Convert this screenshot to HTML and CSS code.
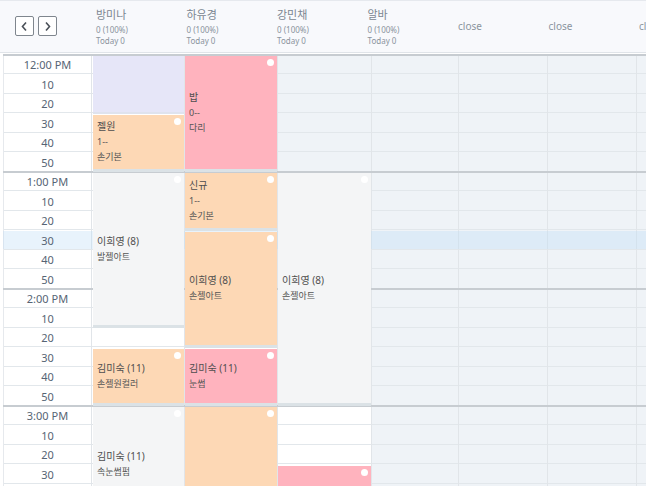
FILE: index.html
```html
<!DOCTYPE html>
<html lang="ko">
<head>
<meta charset="utf-8">
<title>Schedule</title>
<link rel="stylesheet" href="styles.css">
</head>
<body>
<div class="header">
  <div class="nav">
    <button class="navbtn" aria-label="prev"><svg width="9" height="11" viewBox="0 0 9 11"><path d="M6 1.5 L2.5 5.5 L6 9.5" fill="none" stroke="#4a5058" stroke-width="1.6"/></svg></button>
    <button class="navbtn" aria-label="next"><svg width="9" height="11" viewBox="0 0 9 11"><path d="M3 1.5 L6.5 5.5 L3 9.5" fill="none" stroke="#4a5058" stroke-width="1.6"/></svg></button>
  </div>
  <div class="staff"><div class="sname">방미나</div><div class="ssub">0 (100%)</div><div class="ssub">Today 0</div></div>
  <div class="staff"><div class="sname">하유경</div><div class="ssub">0 (100%)</div><div class="ssub">Today 0</div></div>
  <div class="staff"><div class="sname">강민채</div><div class="ssub">0 (100%)</div><div class="ssub">Today 0</div></div>
  <div class="staff"><div class="sname">알바</div><div class="ssub">0 (100%)</div><div class="ssub">Today 0</div></div>
  <div class="staff closed">close</div>
  <div class="staff closed">close</div>
  <div class="staff closed">close</div>
</div>

<div class="grid">
  <div class="colbg c1 white"></div>
  <div class="colbg c2 white"></div>
  <div class="colbg c3 white"></div>
  <div class="colbg c4 white"></div>
  <div class="offhours c4"></div>
  <div class="colbg c5"></div>
  <div class="colbg c6"></div>
  <div class="colbg c7"></div>
  <div class="colbg c8"></div>

  <div class="nowrow"></div>

  <div class="hourline h0"></div>
  <div class="hourline h1"></div>
  <div class="hourline h2"></div>
  <div class="hourline h3"></div>

  <div class="time r0">12:00 PM</div>
  <div class="time r1">10</div>
  <div class="time r2">20</div>
  <div class="time r3">30</div>
  <div class="time r4">40</div>
  <div class="time r5">50</div>
  <div class="time r6">1:00 PM</div>
  <div class="time r7">10</div>
  <div class="time r8">20</div>
  <div class="time r9">30</div>
  <div class="time r10">40</div>
  <div class="time r11">50</div>
  <div class="time r12">2:00 PM</div>
  <div class="time r13">10</div>
  <div class="time r14">20</div>
  <div class="time r15">30</div>
  <div class="time r16">40</div>
  <div class="time r17">50</div>
  <div class="time r18">3:00 PM</div>
  <div class="time r19">10</div>
  <div class="time r20">20</div>
  <div class="time r21">30</div>
  <div class="time r22">40</div>
  <div class="time r23">50</div>

  <!-- 방미나 -->
  <div class="ev lav c2 e1"></div>
  <div class="ev peach c2 e2"><span class="dot"></span><div class="t">젤원</div><div class="s">1--</div><div class="s">손기본</div></div>
  <div class="ev gray c2 e3"><span class="dot"></span><div class="t">이희영 (8)</div><div class="s">발젤아트</div></div>
  <div class="ev peach c2 e4"><span class="dot"></span><div class="t">김미숙 (11)</div><div class="s">손젤원컬러</div></div>
  <div class="ev gray c2 e5"><span class="dot"></span><div class="t">김미숙 (11)</div><div class="s">속눈썹펌</div></div>

  <!-- 하유경 -->
  <div class="ev pink c3 f1"><span class="dot"></span><div class="t">밥</div><div class="s">0--</div><div class="s">다리</div></div>
  <div class="ev peach c3 f2"><span class="dot"></span><div class="t">신규</div><div class="s">1--</div><div class="s">손기본</div></div>
  <div class="ev peach c3 f3"><span class="dot"></span><div class="t">이희영 (8)</div><div class="s">손젤아트</div></div>
  <div class="ev pink c3 f4"><span class="dot"></span><div class="t">김미숙 (11)</div><div class="s">눈썹</div></div>
  <div class="ev peach c3 f5"><span class="dot"></span></div>

  <!-- 강민채 -->
  <div class="ev gray c4 g1"><span class="dot"></span><div class="t">이희영 (8)</div><div class="s">손젤아트</div></div>
  <div class="ev pink c4 g2"><span class="dot"></span></div>
</div>
</body>
</html>
```
FILE: styles.css
```css
* { box-sizing: border-box; }
html, body {
  margin: 0;
  padding: 0;
  width: 646px;
  height: 486px;
  overflow: hidden;
  background: #ffffff;
  font-family: "Noto Sans", "Noto Sans CJK KR", sans-serif;
}

.header {
  display: flex;
  height: 53px;
  background: #f8f9fc;
  border-top: 1px solid #e6e9ee;
  border-bottom: 1px solid #e0e4e9;
  white-space: nowrap;
  overflow: hidden;
}
.nav {
  flex: 0 0 92px;
  display: flex;
  gap: 4px;
  padding: 15px 0 0 15px;
}
.navbtn {
  width: 19px;
  height: 20px;
  padding: 0;
  margin: 0;
  border: 1px solid #7f868e;
  border-radius: 2px;
  background: #ffffff;
  display: flex;
  align-items: center;
  justify-content: center;
}
.staff {
  flex: 0 0 90.5px;
  padding: 6px 0 0 4px;
  color: #7b8691;
}
.sname {
  font-size: 11px;
  line-height: 15px;
  height: 17px;
}
.ssub {
  font-size: 8px;
  line-height: 11px;
  color: #8a939c;
}
.staff.closed {
  padding-top: 18px;
  font-size: 10px;
  color: #8a949e;
}

.grid {
  display: grid;
  padding: 2px 0 0 3px;
  grid-template-columns: 89px 93px 93px 94px 87px 89px 89px 89px;
  grid-template-rows: repeat(27, 19.5px);
  width: 726px;
}

.c1 { grid-column: 1; }
.c2 { grid-column: 2; }
.c3 { grid-column: 3; }
.c4 { grid-column: 4; }
.c5 { grid-column: 5; }
.c6 { grid-column: 6; }
.c7 { grid-column: 7; }
.c8 { grid-column: 8; }

.colbg {
  grid-row: 1 / -1;
  background-color: #eff3f7;
  background-image: repeating-linear-gradient(to bottom, transparent 0, transparent 18.5px, #e2e7eb 18.5px, #e2e7eb 19.5px);
  border-right: 1px solid #e1e5e9;
  z-index: 0;
}
.colbg.white { background-color: #ffffff; }
.colbg.c1 { border-left: 1px solid #e6e9ed; }

.offhours {
  grid-row: 1 / 7;
  background-color: #eff3f7;
  background-image: repeating-linear-gradient(to bottom, transparent 0, transparent 18.5px, #e2e7eb 18.5px, #e2e7eb 19.5px);
  border-right: 1px solid #e1e5e9;
  z-index: 1;
}

.nowrow {
  grid-row: 10;
  grid-column: 1 / -1;
  background: rgba(190, 222, 245, 0.35);
  margin-bottom: 1px;
  z-index: 1;
}

.hourline {
  grid-column: 1 / -1;
  align-self: start;
  height: 2px;
  margin-top: -1px;
  background: #c7ccd1;
  z-index: 2;
}
.h0 { grid-row: 1; }
.h1 { grid-row: 7; }
.h2 { grid-row: 13; }
.h3 { grid-row: 19; }

.time {
  grid-column: 1;
  display: flex;
  align-items: center;
  justify-content: center;
  font-size: 11px;
  color: #566474;
  z-index: 3;
}
.r0 { grid-row: 1; } .r1 { grid-row: 2; } .r2 { grid-row: 3; } .r3 { grid-row: 4; }
.r4 { grid-row: 5; } .r5 { grid-row: 6; } .r6 { grid-row: 7; } .r7 { grid-row: 8; }
.r8 { grid-row: 9; } .r9 { grid-row: 10; } .r10 { grid-row: 11; } .r11 { grid-row: 12; }
.r12 { grid-row: 13; } .r13 { grid-row: 14; } .r14 { grid-row: 15; } .r15 { grid-row: 16; }
.r16 { grid-row: 17; } .r17 { grid-row: 18; } .r18 { grid-row: 19; } .r19 { grid-row: 20; }
.r20 { grid-row: 21; } .r21 { grid-row: 22; } .r22 { grid-row: 23; } .r23 { grid-row: 24; }

.ev {
  position: relative;
  z-index: 4;
  display: flex;
  flex-direction: column;
  justify-content: center;
  padding: 0 4px 0 4px;
  margin: 1px 1px 0 0;
  border-bottom: 3px solid #dbe2e6;
  color: #4e4e4e;
  overflow: hidden;
}
.ev.c2 { margin-left: 1px; }
.lav { background: #e6e6f8; border-bottom-width: 2px; border-bottom-color: #dfe3ee; }
.peach { background: #fdd8b5; }
.pink { background: #ffb3be; }
.gray { background: #f4f5f6; }

.t {
  font-size: 10px;
  line-height: 15px;
}
.s {
  font-size: 9px;
  line-height: 15px;
  color: #555555;
}
.dot {
  position: absolute;
  top: 3px;
  right: 3px;
  width: 7px;
  height: 7px;
  border-radius: 50%;
  background: #ffffff;
}

.e1 { grid-row: 1 / 4; }
.e2 { grid-row: 4 / 7; }
.e3 { grid-row: 7 / 15; }
.e4 { grid-row: 16 / 19; }
.e5 { grid-row: 19 / 25; }
.f1 { grid-row: 1 / 7; }
.f2 { grid-row: 7 / 10; }
.f3 { grid-row: 10 / 16; }
.f4 { grid-row: 16 / 19; }
.f5 { grid-row: 19 / 28; }
.g1 { grid-row: 7 / 19; }
.g2 { grid-row: 22 / 28; }
```
